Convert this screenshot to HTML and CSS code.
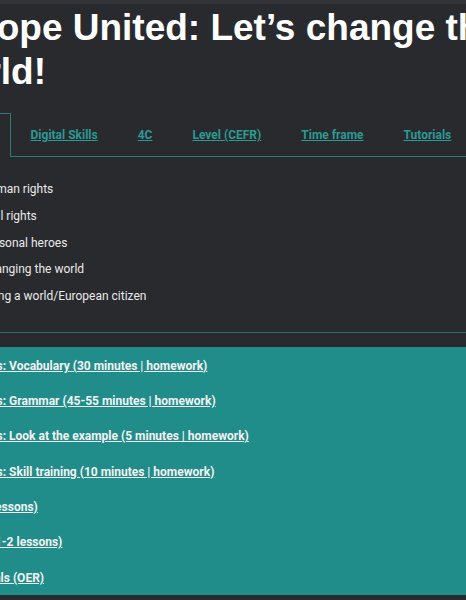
FILE: index.html
```html
<!DOCTYPE html>
<html lang="en">
<head>
<meta charset="utf-8">
<title>Europe United: Let’s change the world!</title>
<link rel="stylesheet" href="styles.css">
</head>
<body>
<div class="strip"></div>
<div class="page">
  <h1 class="title">Europe United: Let’s change the world!</h1>
  <nav class="tabs">
    <a class="tab tab-active" href="#">Topics</a>
    <a class="tab" href="#">Digital Skills</a>
    <a class="tab" href="#">4C</a>
    <a class="tab" href="#">Level (CEFR)</a>
    <a class="tab" href="#">Time frame</a>
    <a class="tab" href="#">Tutorials</a>
  </nav>
  <ul class="topics">
    <li>Human rights</li>
    <li>Civil rights</li>
    <li>Personal heroes</li>
    <li>Changing the world</li>
    <li>Being a world/European citizen</li>
  </ul>
  <div class="rule"></div>
</div>
<section class="panel">
  <ul class="links">
    <li><a href="#">Tasks: Vocabulary (30 minutes | homework)</a></li>
    <li><a href="#">Tasks: Grammar (45-55 minutes | homework)</a></li>
    <li><a href="#">Tasks: Look at the example (5 minutes | homework)</a></li>
    <li><a href="#">Tasks: Skill training (10 minutes | homework)</a></li>
    <li><a href="#">(12 lessons)</a></li>
    <li><a href="#">Art (1-2 lessons)</a></li>
    <li><a href="#">Portals (OER)</a></li>
  </ul>
</section>
</body>
</html>
```
FILE: styles.css
```css
html, body {
  margin: 0;
  padding: 0;
}
body {
  background: #292a2e;
  overflow: hidden;
  width: 466px;
  height: 600px;
  font-family: Roboto, "Liberation Sans", sans-serif;
}
.strip {
  height: 4px;
  background: #333438;
}
.page {
  margin-left: -65px;
  width: 700px;
}
.title {
  margin: 0;
  padding-top: 2px;
  width: 600px;
  font-family: "Liberation Sans", Arial, sans-serif;
  font-weight: 700;
  font-size: 37px;
  line-height: 44px;
  color: #ffffff;
}
.tabs {
  display: flex;
  align-items: flex-start;
  margin-top: 19px;
  margin-left: 0;
  border-bottom: 1px solid #2b7c78;
}
.tab {
  display: block;
  padding: 1px 20px 0;
  height: 42px;
  line-height: 42px;
  font-size: 12px;
  font-weight: 700;
  color: #2a9a94;
  text-decoration: underline;
}
.tab-active {
  padding: 0 19px;
  border: 1px solid #2b7c78;
  border-bottom: none;
  background: #292a2e;
  height: 43px;
  margin-bottom: -1px;
  color: #e8e8e8;
}
.topics {
  list-style: none;
  margin: 19px 0 0;
  padding: 0 0 0 46px;
  font-size: 12px;
  color: #e9e9e9;
}
.topics li {
  height: 26.75px;
  line-height: 26.75px;
}
.rule {
  margin-top: 22px;
  height: 1px;
  background: #2b6e6d;
}
.panel {
  margin-top: 14px;
  background: #218d8b;
  height: 248px;
}
.links {
  list-style: none;
  margin: 0 0 0 -29px;
  padding: 0;
}
.links li {
  height: 35.3px;
  line-height: 35.3px;
}
.links a {
  font-size: 12px;
  font-weight: 700;
  color: #f2f2f2;
  text-decoration: underline;
}
```
